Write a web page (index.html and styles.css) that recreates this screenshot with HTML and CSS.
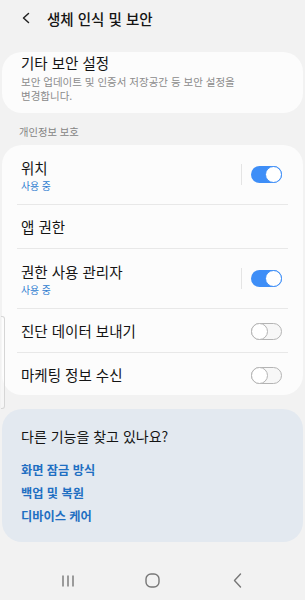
FILE: index.html
```html
<!DOCTYPE html>
<html lang="ko">
<head>
<meta charset="utf-8">
<link rel="stylesheet" href="styles.css">
</head>
<body>
<div class="screen">
  <header class="header">
    <svg class="back" width="10" height="12" viewBox="0 0 10 12"><path d="M7.5 1.5 L2.5 6 L7.5 10.5" fill="none" stroke="#222" stroke-width="1.5" stroke-linecap="round" stroke-linejoin="round"/></svg>
    <h1 class="title">생체 인식 및 보안</h1>
  </header>

  <section class="card card-top">
    <div class="row-title">기타 보안 설정</div>
    <div class="desc">보안 업데이트 및 인증서 저장공간 등 보안 설정을<br>변경합니다.</div>
  </section>

  <div class="section-label">개인정보 보호</div>

  <section class="card list">
    <div class="row double">
      <div class="texts">
        <div class="row-title">위치</div>
        <div class="status">사용 중</div>
      </div>
      <span class="vsep"></span>
      <span class="switch on"><span class="knob"></span></span>
    </div>
    <div class="row single">
      <div class="row-title">앱 권한</div>
    </div>
    <div class="row double">
      <div class="texts">
        <div class="row-title">권한 사용 관리자</div>
        <div class="status">사용 중</div>
      </div>
      <span class="vsep"></span>
      <span class="switch on"><span class="knob"></span></span>
    </div>
    <div class="row single">
      <div class="row-title">진단 데이터 보내기</div>
      <span class="switch off"><span class="knob"></span></span>
    </div>
    <div class="row single last">
      <div class="row-title">마케팅 정보 수신</div>
      <span class="switch off"><span class="knob"></span></span>
    </div>
  </section>

  <section class="card suggest">
    <div class="suggest-title">다른 기능을 찾고 있나요?</div>
    <div class="links">
      <a class="link">화면 잠금 방식</a>
      <a class="link">백업 및 복원</a>
      <a class="link">디바이스 케어</a>
    </div>
  </section>

  <nav class="navbar">
    <span class="nav-item">
      <svg width="14" height="12" viewBox="0 0 14 12"><path d="M2 0.5V11.5M7 0.5V11.5M12 0.5V11.5" stroke="#777" stroke-width="1.4"/></svg>
    </span>
    <span class="nav-item">
      <svg width="15" height="15" viewBox="0 0 15 15"><rect x="1" y="1" width="13" height="13" rx="5" fill="none" stroke="#777" stroke-width="1.4"/></svg>
    </span>
    <span class="nav-item">
      <svg width="9" height="15" viewBox="0 0 9 15"><path d="M7.5 1 L1.5 7.5 L7.5 14" fill="none" stroke="#777" stroke-width="1.4" stroke-linecap="round" stroke-linejoin="round"/></svg>
    </span>
  </nav>

  <div class="edge-handle"></div>
</div>
</body>
</html>
```

FILE: styles.css
```css
* { box-sizing: border-box; margin: 0; padding: 0; }
html, body { background: #f2f2f2; }
body {
  width: 305px;
  height: 600px;
  overflow: hidden;
  font-family: "Noto Sans CJK KR", "Noto Sans", sans-serif;
  color: #141414;
}
.screen { position: relative; height: 600px; }

.header {
  height: 36px;
  display: flex;
  align-items: center;
  padding-left: 21px;
}
.back { margin-right: 16px; }
.title { font-size: 14.5px; font-weight: 500; letter-spacing: 0; }

.card {
  margin: 0 2px;
  background: #fcfcfc;
  border-radius: 20px;
}
.card-top {
  margin-top: 16px;
  padding: 1px 19px 11px;
}
.row-title { font-size: 14.5px; line-height: 18px; font-weight: 400; }
.card-top .row-title { line-height: 20px; }
.desc {
  margin-top: 2px;
  font-size: 10.5px;
  line-height: 13.5px;
  color: #8b8b8b;
}

.section-label {
  padding: 12px 19px 6px;
  font-size: 10.3px;
  line-height: 14px;
  color: #848484;
}

.list { padding: 0 15px; }
.row {
  display: flex;
  align-items: center;
  padding: 0 6px 0 4px;
  border-bottom: 1px solid #e8e8e8;
}
.row.last { border-bottom: none; }
.row.single { padding-top: 13px; padding-bottom: 12px; }
.row.last { padding-bottom: 11px; }
.row.double { padding-top: 14px; padding-bottom: 11px; }
.texts { flex: 1; }
.row.single .row-title { flex: 1; }
.status {
  margin-top: 2px;
  font-size: 9.8px;
  line-height: 14px;
  color: #2f7dd0;
}
.vsep {
  width: 1px;
  height: 21px;
  background: #e4e4e4;
  margin-right: 9px;
  margin-top: -4px;
}

.switch {
  position: relative;
  width: 31px;
  height: 17px;
  border-radius: 9px;
  flex: none;
}
.switch.on { background: #3e8ef7; margin-top: -4px; }
.switch.off { border: 1px solid #b4b4b4; background: #f7f7f7; }
.knob {
  position: absolute;
  top: 0;
  width: 17px;
  height: 17px;
  border-radius: 50%;
  background: #fff;
}
.switch.on .knob { right: 0; border: 1.5px solid #3e8ef7; }
.switch.off .knob { left: -1px; top: -1px; border: 1px solid #b4b4b4; }

.suggest {
  margin-top: 14px;
  background: #e3e9f0;
  padding: 17px 19px 14px;
}
.suggest-title { font-size: 14px; line-height: 20px; }
.links { margin-top: 12.5px; display: flex; flex-direction: column; }
.link {
  font-size: 12.2px;
  line-height: 23px;
  font-weight: 700;
  color: #1f6fc2;
}

.navbar {
  margin-top: 21px;
  height: 36px;
  display: flex;
  justify-content: center;
}
.nav-item {
  width: 85px;
  display: flex;
  align-items: center;
  justify-content: center;
}

.edge-handle {
  position: absolute;
  left: 1px;
  top: 316px;
  width: 4px;
  height: 93px;
  border: 1px solid #d6d6d6;
  border-left: none;
  border-radius: 0 3px 3px 0;
  background: rgba(255,255,255,0.3);
}
```
